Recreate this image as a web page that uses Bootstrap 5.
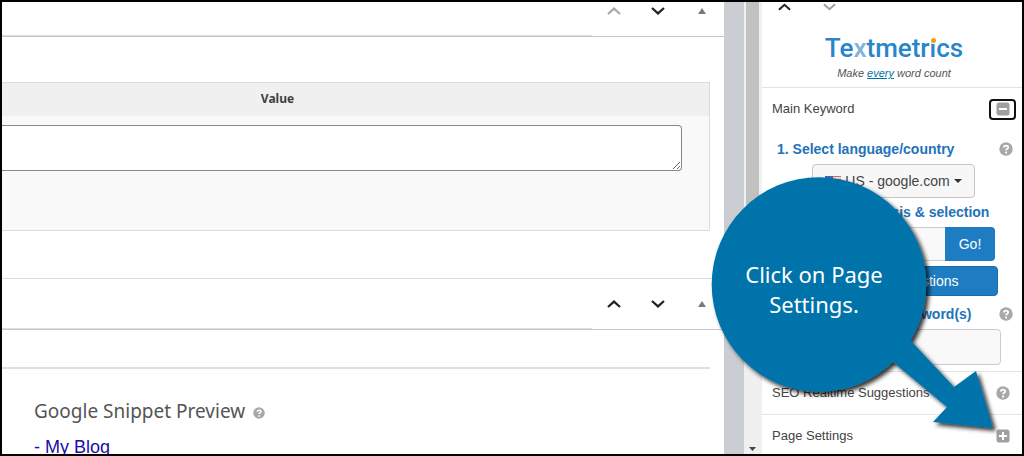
<!DOCTYPE html>
<html lang="en">
<head>
<meta charset="utf-8">
<meta name="viewport" content="width=device-width, initial-scale=1">
<title>Textmetrics – Page Settings</title>
<link href="https://cdn.jsdelivr.net/npm/bootstrap@5.3.0/dist/css/bootstrap.min.css" rel="stylesheet">
<style>
  body { font-family: "Liberation Sans", Arial, sans-serif; font-size: 13px; line-height: 20px; color: #3c434a; background: #fff; }
  .frame { border: 2px solid #000; }
  .humanist { font-family: "Noto Sans", "Open Sans", sans-serif; }
  svg { display: block; }

  /* editor area */
  .editor { min-width: 0; }
  .box-head { border-bottom: 1px solid #c3c8cf; }
  .box-title { border-bottom: 1px solid #dcdfe3; }
  .box-tools { width: 132px; height: 50px; }
  .head-cut { margin-top: -16px; }
  .tool { width: 44px; height: 50px; border: 0; background: none; padding: 0; display: grid; place-items: center; color: #1d2327; }
  .tool.dim { color: #a7aaad; }
  .tool.small-tri { color: #787c82; }
  .inside-a { padding: 45px 14px 47px 0; }
  .meta-table { border: 1px solid #dcdcde; border-left: 0; background: #f9f9f9; border-collapse: separate; border-spacing: 0; width: 100%; }
  .meta-table th { background: #f0f0f0; height: 33px; text-align: center; color: #3f3f3f; padding: 0 156px 2px 0; font-size: 12px; }
  .meta-table td { padding: 9px 27px 59px 0; }
  .meta-table textarea { display: block; width: 100%; height: 46px; border: 1px solid #7e8993; border-left: 0; border-radius: 0 4px 4px 0; background: #fff; }
  .box-b { border-top: 1px solid #dcdcde; }
  .rule { height: 2px; background: #dcdfe5; margin: 37px 14px 0 0; }
  .snippet { padding: 26px 14px 0 32px; }
  .snippet h2 { font-size: 19px; line-height: 32px; color: #555; margin: 0; font-weight: 400; }
  .snippet a { display: inline-block; font-size: 18px; line-height: 24px; color: #1a0dab; text-decoration: none; margin-top: 8px; }

  .gutter { width: 20px; background: #caced3; }
  .scroll { width: 18px; background: #f0f0f0; padding: 0 3px 3px 2px; }
  .thumb { height: 270px; background: #c1c1c1; }

  /* sidebar */
  .side { width: 260px; }
  .brand { height: 86px; border-bottom: 1px solid #e2e4e7; }
  .brand-nav { height: 10px; }
  .brand-name { font-family: "Roboto", sans-serif; font-weight: 500; font-size: 26px; line-height: 30px; color: #2786cb; margin: 21px 0 0 4px; }
  .brand-name .pale { color: #7fb4df; }
  .dotted-i { position: relative; }
  .dotted-i::after { content: ""; position: absolute; left: 1px; top: 5px; width: 5px; height: 5px; border-radius: 50%; background: #eba310; box-shadow: 0 0 0 1px #fff; }
  .tagline { font-size: 11px; line-height: 16px; color: #555; margin: 2px 0 0 4px; }
  .tagline a { color: #0073aa; }
  .side-row { border-top: 1px solid #e2e4e7; height: 43px; padding: 0 12px 0 10px; color: #444; }
  .side-row.first { border: 0; padding-right: 6px; height: 42px; }
  .icon-btn { border: 0; background: none; padding: 0; color: #a0a0a0; }
  .icon-btn.focused { border: 2px solid #111; border-radius: 4px; width: 27px; height: 21px; display: grid; place-items: center; }
  .step { font-weight: 700; font-size: 14px; line-height: 20px; color: #1e73b9; }
  .help { color: #a8a8a8; flex: none; }
  .steps { padding: 9px 9px 0 15px; height: 241px; }
  .country { margin: 5px 38px 0 35px; height: 34px; width: 163px; font-size: 14px; border: 1px solid #c6c6c6; border-radius: 4px; background: #f7f7f7; color: #444; padding: 0; white-space: nowrap; }
  .caret { border: 4px solid transparent; border-top-color: #333; border-bottom: 0; }
  .field { border: 1px solid #ccc; background: #f9f9f9; border-radius: 4px; min-width: 0; width: 100%; }
  .go-row { height: 34px; margin: 4px 18px 0 13px; }
  .go-row .field { border-radius: 4px 0 0 4px; border-right: 0; }
  .solid { background: #1e7cc2; color: #fff; border: 0; font-size: 14px; padding: 0; }
  .go { width: 50px; flex: none; border-radius: 0 4px 4px 0; }
  .suggest { height: 30px; margin: 5px 15px 0 9px; border-radius: 4px; border: 1px solid #1a6cab; }
  .kw { height: 36px; margin: 5px 12px 0 13px; }

  /* instruction bubble lying over the page, its arrow ending at the Page Settings toggle */
  .callout { position: absolute; right: 18px; top: 165px; width: 300px; height: 280px; pointer-events: none; }
  .callout svg { position: absolute; inset: 0; overflow: visible; }
  .callout p { position: absolute; left: 0; top: 92px; width: 220px; font-size: 22px; line-height: 30px; color: #fff; margin: 0; text-align: center; }
</style>
</head>
<body>
<svg class="d-none" aria-hidden="true">
  <symbol id="up" viewBox="0 0 14 8"><path d="M1 7 7 1.6 13 7" fill="none" stroke="currentColor" stroke-width="2.2"/></symbol>
  <symbol id="down" viewBox="0 0 14 8"><path d="M1 1 7 6.4 13 1" fill="none" stroke="currentColor" stroke-width="2.2"/></symbol>
  <symbol id="tri" viewBox="0 0 8 6"><path d="M4 0 8 6H0z" fill="currentColor"/></symbol>
  <symbol id="q" viewBox="0 0 14 14"><circle cx="7" cy="7" r="6.7" fill="currentColor"/><path d="M4.900 5.400C4.900 3.200 9.200 3 9.200 5.400 9.200 6.800 7.200 6.700 7.100 8.300M7.100 9.600v1.800" fill="none" stroke="#fff" stroke-width="1.8"/></symbol>
  <symbol id="minus" viewBox="0 0 14 14"><rect x=".5" y=".5" width="13" height="13" rx="2.5" fill="currentColor"/><path d="M3 7h8" stroke="#fff" stroke-width="2"/></symbol>
  <symbol id="plus" viewBox="0 0 14 14"><rect x=".5" y=".5" width="13" height="13" rx="2.5" fill="currentColor"/><path d="M3 7h8M7 3v8" stroke="#fff" stroke-width="2"/></symbol>
</svg>

<div class="frame position-relative d-flex vh-100 overflow-hidden">
  <main class="editor flex-grow-1">
    <section>
      <div class="box-head head-cut d-flex">
        <div class="box-title flex-grow-1"></div>
        <div class="box-tools d-flex">
          <button class="tool dim" type="button" aria-label="Move up"><svg width="14" height="8"><use href="#up"/></svg></button>
          <button class="tool" type="button" aria-label="Move down"><svg width="14" height="8"><use href="#down"/></svg></button>
          <button class="tool small-tri" type="button" aria-label="Toggle panel"><svg width="8" height="6"><use href="#tri"/></svg></button>
        </div>
      </div>
      <div class="inside-a">
        <table class="meta-table">
          <thead><tr><th class="humanist" id="value-head" scope="col">Value</th></tr></thead>
          <tbody><tr><td><textarea aria-labelledby="value-head"></textarea></td></tr></tbody>
        </table>
      </div>
    </section>
    <section class="box-b">
      <div class="box-head d-flex">
        <div class="box-title flex-grow-1"></div>
        <div class="box-tools d-flex">
          <button class="tool" type="button" aria-label="Move up"><svg width="14" height="8"><use href="#up"/></svg></button>
          <button class="tool" type="button" aria-label="Move down"><svg width="14" height="8"><use href="#down"/></svg></button>
          <button class="tool small-tri" type="button" aria-label="Toggle panel"><svg width="8" height="6"><use href="#tri"/></svg></button>
        </div>
      </div>
      <div class="rule"></div>
      <div class="snippet">
        <div class="d-flex align-items-center gap-2">
          <h2 class="humanist">Google Snippet Preview</h2>
          <svg class="help mt-1" width="12" height="12"><use href="#q"/></svg>
        </div>
        <a href="#">- My Blog</a>
      </div>
    </section>
  </main>

  <div class="gutter flex-shrink-0"></div>
  <div class="scroll flex-shrink-0 d-flex flex-column justify-content-between">
    <div class="thumb"></div>
    <svg class="mx-auto" width="7" height="4"><path d="M0 0h7L3.5 4z" fill="#444"/></svg>
  </div>

  <aside class="side flex-shrink-0">
    <header class="brand text-center">
      <div class="brand-nav d-flex">
        <button class="icon-btn text-dark ms-3" type="button" aria-label="Previous"><svg width="13" height="8"><use href="#up"/></svg></button>
        <button class="icon-btn ms-4 px-2" type="button" aria-label="Next"><svg width="13" height="8"><use href="#down"/></svg></button>
      </div>
      <div class="brand-name">Te<span class="pale">x</span>tmetr<span class="dotted-i">i</span>cs</div>
      <div class="tagline fst-italic">Make <a href="#">every</a> word count</div>
    </header>
    <div class="side-row first d-flex align-items-center justify-content-between">
      <span>Main Keyword</span>
      <button class="icon-btn focused" type="button" aria-label="Collapse Main Keyword"><svg width="14" height="14"><use href="#minus"/></svg></button>
    </div>
    <div class="steps">
      <div class="d-flex align-items-center justify-content-between"><label class="step" for="country">1. Select language/country</label><svg class="help" width="14" height="14"><use href="#q"/></svg></div>
      <button class="country d-flex align-items-center justify-content-center gap-1" id="country" type="button">
        <svg width="16" height="11"><path d="M0 0h16v11H0z" fill="#fff"/><path d="M0 .5h16M0 3.5h16M0 6.500h16M0 9.500h16" stroke="#e06a5c" stroke-width="1.5"/><path d="M0 0h8v6H0z" fill="#4a62c8"/></svg>
        US - google.com <span class="caret"></span>
      </button>
      <div class="mt-1"><label class="step" for="query">2. Keyword analysis &amp; selection</label></div>
      <div class="go-row d-flex"><input class="field" id="query" type="text"><button class="solid go" type="button">Go!</button></div>
      <div class="d-flex"><button class="solid suggest flex-grow-1" type="button">Keyword suggestions</button></div>
      <div class="d-flex align-items-center justify-content-between mt-2"><label class="step" for="kw">3. Choose related keyword(s)</label><svg class="help" width="14" height="14"><use href="#q"/></svg></div>
      <div class="kw d-flex"><input class="field" id="kw" type="text"></div>
    </div>
    <div class="side-row d-flex align-items-center justify-content-between">
      <span>SEO Realtime Suggestions</span>
      <svg class="help" width="14" height="14"><use href="#q"/></svg>
    </div>
    <div class="side-row d-flex align-items-center justify-content-between">
      <span>Page Settings</span>
      <button class="icon-btn" type="button" aria-label="Expand Page Settings"><svg width="14" height="14"><use href="#plus"/></svg></button>
    </div>
  </aside>

  <div class="callout">
    <svg width="300" height="280" viewBox="704 167 300 280" aria-hidden="true">
      <defs><filter id="sh" x="-10%" y="-10%" width="120%" height="120%"><feDropShadow dx="3" dy="3" stdDeviation="2" flood-color="#000" flood-opacity=".8"/></filter></defs>
      <g fill="#0073aa" filter="url(#sh)"><path d="M880 316 911 341 954 387 976 371 993 428 933 422 947 407 893 362 865 340z"/><circle cx="819" cy="284.500" r="107.300"/></g>
    </svg>
    <p class="humanist">Click on Page Settings.</p>
  </div>
</div>
<script src="https://cdn.jsdelivr.net/npm/bootstrap@5.3.0/dist/js/bootstrap.bundle.min.js"></script>
</body>
</html>
